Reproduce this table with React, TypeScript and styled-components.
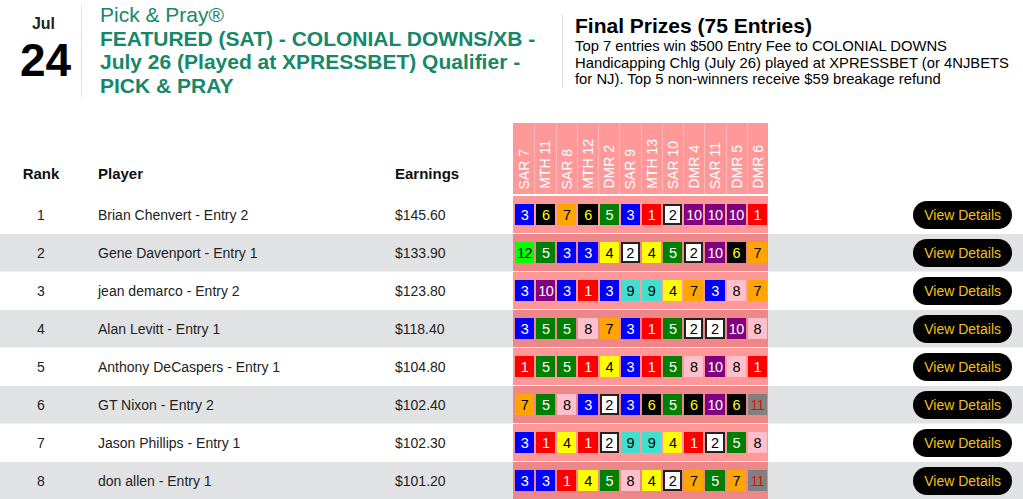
import styled, { createGlobalStyle } from 'styled-components';

const GlobalStyle = createGlobalStyle`
  body {
    margin: 0;
    background: #fff;
    font-family: "Liberation Sans", Arial, sans-serif;
    color: #222;
  }
`;

const races = [
  'SAR 7', 'MTH 11', 'SAR 8', 'MTH 12', 'DMR 2', 'SAR 9',
  'MTH 13', 'SAR 10', 'DMR 4', 'SAR 11', 'DMR 5', 'DMR 6',
];

const entries = [
  { rank: 1, name: 'Brian Chenvert - Entry 2', earn: '$145.60', picks: [3, 6, 7, 6, 5, 3, 1, 2, 10, 10, 10, 1] },
  { rank: 2, name: 'Gene Davenport - Entry 1', earn: '$133.90', picks: [12, 5, 3, 3, 4, 2, 4, 5, 2, 10, 6, 7] },
  { rank: 3, name: 'jean demarco - Entry 2', earn: '$123.80', picks: [3, 10, 3, 1, 3, 9, 9, 4, 7, 3, 8, 7] },
  { rank: 4, name: 'Alan Levitt - Entry 1', earn: '$118.40', picks: [3, 5, 5, 8, 7, 3, 1, 5, 2, 2, 10, 8] },
  { rank: 5, name: 'Anthony DeCaspers - Entry 1', earn: '$104.80', picks: [1, 5, 5, 1, 4, 3, 1, 5, 8, 10, 8, 1] },
  { rank: 6, name: 'GT Nixon - Entry 2', earn: '$102.40', picks: [7, 5, 8, 3, 2, 3, 6, 5, 6, 10, 6, 11] },
  { rank: 7, name: 'Jason Phillips - Entry 1', earn: '$102.30', picks: [3, 1, 4, 1, 2, 9, 9, 4, 1, 2, 5, 8] },
  { rank: 8, name: 'don allen - Entry 1', earn: '$101.20', picks: [3, 3, 1, 4, 5, 8, 4, 2, 7, 5, 7, 11] },
];

// saddle cloth colours: [background, text]
const cloth: Record<number, [string, string]> = {
  1: ['#ff0000', '#fff'],
  2: ['#fff', '#000'],
  3: ['#0000ff', '#fff'],
  4: ['#ffff00', '#000'],
  5: ['#008000', '#fff'],
  6: ['#000', '#ffff00'],
  7: ['#ffa500', '#000'],
  8: ['#ffc0cb', '#000'],
  9: ['#40e0d0', '#000'],
  10: ['#800080', '#fff'],
  11: ['#808080', '#ff0000'],
  12: ['#00ff00', '#000'],
};

export default function App() {
  return (
    <Page>
      <GlobalStyle />
      <Top>
        <DateBox>
          <Month>Jul</Month>
          <Day>24</Day>
        </DateBox>
        <TitleBox>
          <Brand>Pick &amp; Pray®</Brand>
          <Title>FEATURED (SAT) - COLONIAL DOWNS/XB - July 26 (Played at XPRESSBET) Qualifier - PICK &amp; PRAY</Title>
        </TitleBox>
        <Prizes>
          <PrizeHead>Final Prizes (75 Entries)</PrizeHead>
          <PrizeText>
            Top 7 entries win $500 Entry Fee to COLONIAL DOWNS Handicapping Chlg (July 26) played at XPRESSBET (or 4NJBETS for NJ). Top 5 non-winners receive $59 breakage refund
          </PrizeText>
        </Prizes>
      </Top>

      <Table>
        <HeadRow>
          <HeadCell align="center">Rank</HeadCell>
          <HeadCell align="indent">Player</HeadCell>
          <HeadCell align="flush">Earnings</HeadCell>
          <RaceHead>
            {races.map(r => (
              <RaceLabel key={r}>
                <span>{r}</span>
              </RaceLabel>
            ))}
          </RaceHead>
          <div />
        </HeadRow>
        {entries.map((e, i) => (
          <Row key={e.rank} striped={i % 2 === 1}>
            <RankCell>{e.rank}</RankCell>
            <PlayerCell>{e.name}</PlayerCell>
            <div>{e.earn}</div>
            <Picks>
              {e.picks.map((p, j) => (
                <Saddle key={j} bg={cloth[p][0]} fg={cloth[p][1]} boxed={p === 2}>
                  {p}
                </Saddle>
              ))}
            </Picks>
            <Action>
              <DetailsButton>View Details</DetailsButton>
            </Action>
          </Row>
        ))}
      </Table>
    </Page>
  );
}

const Page = styled.div`
  width: 1023px;
  height: 499px;
  overflow: hidden;
`;

const Top = styled.div`
  display: flex;
  align-items: flex-start;
  padding-top: 3px;
  height: 120px;
`;

const DateBox = styled.div`
  width: 82px;
  height: 92px;
  margin-top: 2px;
  border-right: 1px solid #e2e2e2;
  display: flex;
  flex-direction: column;
  align-items: center;
  padding-left: 10px;
  box-sizing: border-box;
`;

const Month = styled.div`
  font-size: 16px;
  font-weight: bold;
  margin-top: 10px;
  margin-right: 4px;
  line-height: 18px;
`;

const Day = styled.div`
  font-size: 46px;
  font-weight: bold;
  line-height: 44px;
  margin-top: 5px;
  color: #000;
`;

const TitleBox = styled.div`
  width: 462px;
  padding-left: 18px;
  color: #17876a;
  font-size: 21px;
  line-height: 23.5px;
`;

const Brand = styled.div`
  font-weight: normal;
`;

const Title = styled.div`
  font-weight: bold;
  width: 450px;
`;

const Prizes = styled.div`
  margin-top: 11px;
  border-left: 1px solid #e2e2e2;
  padding-left: 12px;
  width: 440px;
  color: #000;
`;

const PrizeHead = styled.div`
  font-size: 21px;
  font-weight: bold;
  line-height: 24px;
`;

const PrizeText = styled.div`
  font-size: 14.8px;
  line-height: 16.5px;
`;

const cols = '80px 315px 118px 255px 1fr';

const Table = styled.div`
  display: flex;
  flex-direction: column;
`;

const HeadRow = styled.div`
  display: grid;
  grid-template-columns: ${cols};
  height: 71px;
  border-bottom: 2px solid #fff;
  align-items: end;
`;

const HeadCell = styled.div<{ align: 'center' | 'indent' | 'flush' }>`
  font-size: 15px;
  font-weight: bold;
  padding-bottom: 12px;
  padding-left: ${p => (p.align === 'indent' ? '18px' : p.align === 'center' ? '2px' : '0')};
  text-align: ${p => (p.align === 'center' ? 'center' : 'left')};
  color: #111;
`;

const RaceHead = styled.div`
  height: 100%;
  display: grid;
  grid-template-columns: repeat(12, 1fr);
  background: rgba(255, 0, 0, 0.4);
`;

const RaceLabel = styled.div`
  display: flex;
  justify-content: center;
  align-items: flex-end;
  padding-bottom: 5px;
  border-left: 1px solid rgba(255, 255, 255, 0.3);
  &:first-child {
    border-left: none;
  }
  span {
    writing-mode: vertical-rl;
    transform: rotate(180deg);
    color: #fff;
    font-size: 14px;
    white-space: nowrap;
  }
`;

const Row = styled.div<{ striped: boolean }>`
  display: grid;
  grid-template-columns: ${cols};
  height: 38px;
  box-sizing: border-box;
  border-bottom: 1px solid rgba(255, 255, 255, 0.5);
  align-items: center;
  background: ${p => (p.striped ? '#e1e2e4' : '#fff')};
  font-size: 14px;
  color: #222;
`;

const RankCell = styled.div`
  text-align: center;
  padding-left: 2px;
`;

const PlayerCell = styled.div`
  padding-left: 18px;
`;

const Picks = styled.div`
  height: 100%;
  display: grid;
  grid-template-columns: repeat(12, 1fr);
  column-gap: 2px;
  padding: 0 1px 0 2px;
  align-items: center;
  background: rgba(255, 0, 0, 0.4);
`;

const Saddle = styled.div<{ bg: string; fg: string; boxed: boolean }>`
  height: 21px;
  box-sizing: border-box;
  display: flex;
  align-items: center;
  justify-content: center;
  background: ${p => p.bg};
  color: ${p => p.fg};
  border: ${p => (p.boxed ? '2px solid #222' : 'none')};
  font-size: 14.5px;
  letter-spacing: ${p => (p.boxed ? '0' : '-0.5px')};
`;

const Action = styled.div`
  display: flex;
  justify-content: flex-end;
  padding-right: 11px;
`;

const DetailsButton = styled.button`
  height: 28px;
  padding: 0 11px;
  border: none;
  border-radius: 14px;
  background: #000;
  color: #f2c218;
  font-family: "Liberation Sans", Arial, sans-serif;
  font-size: 14px;
  cursor: pointer;
`;
